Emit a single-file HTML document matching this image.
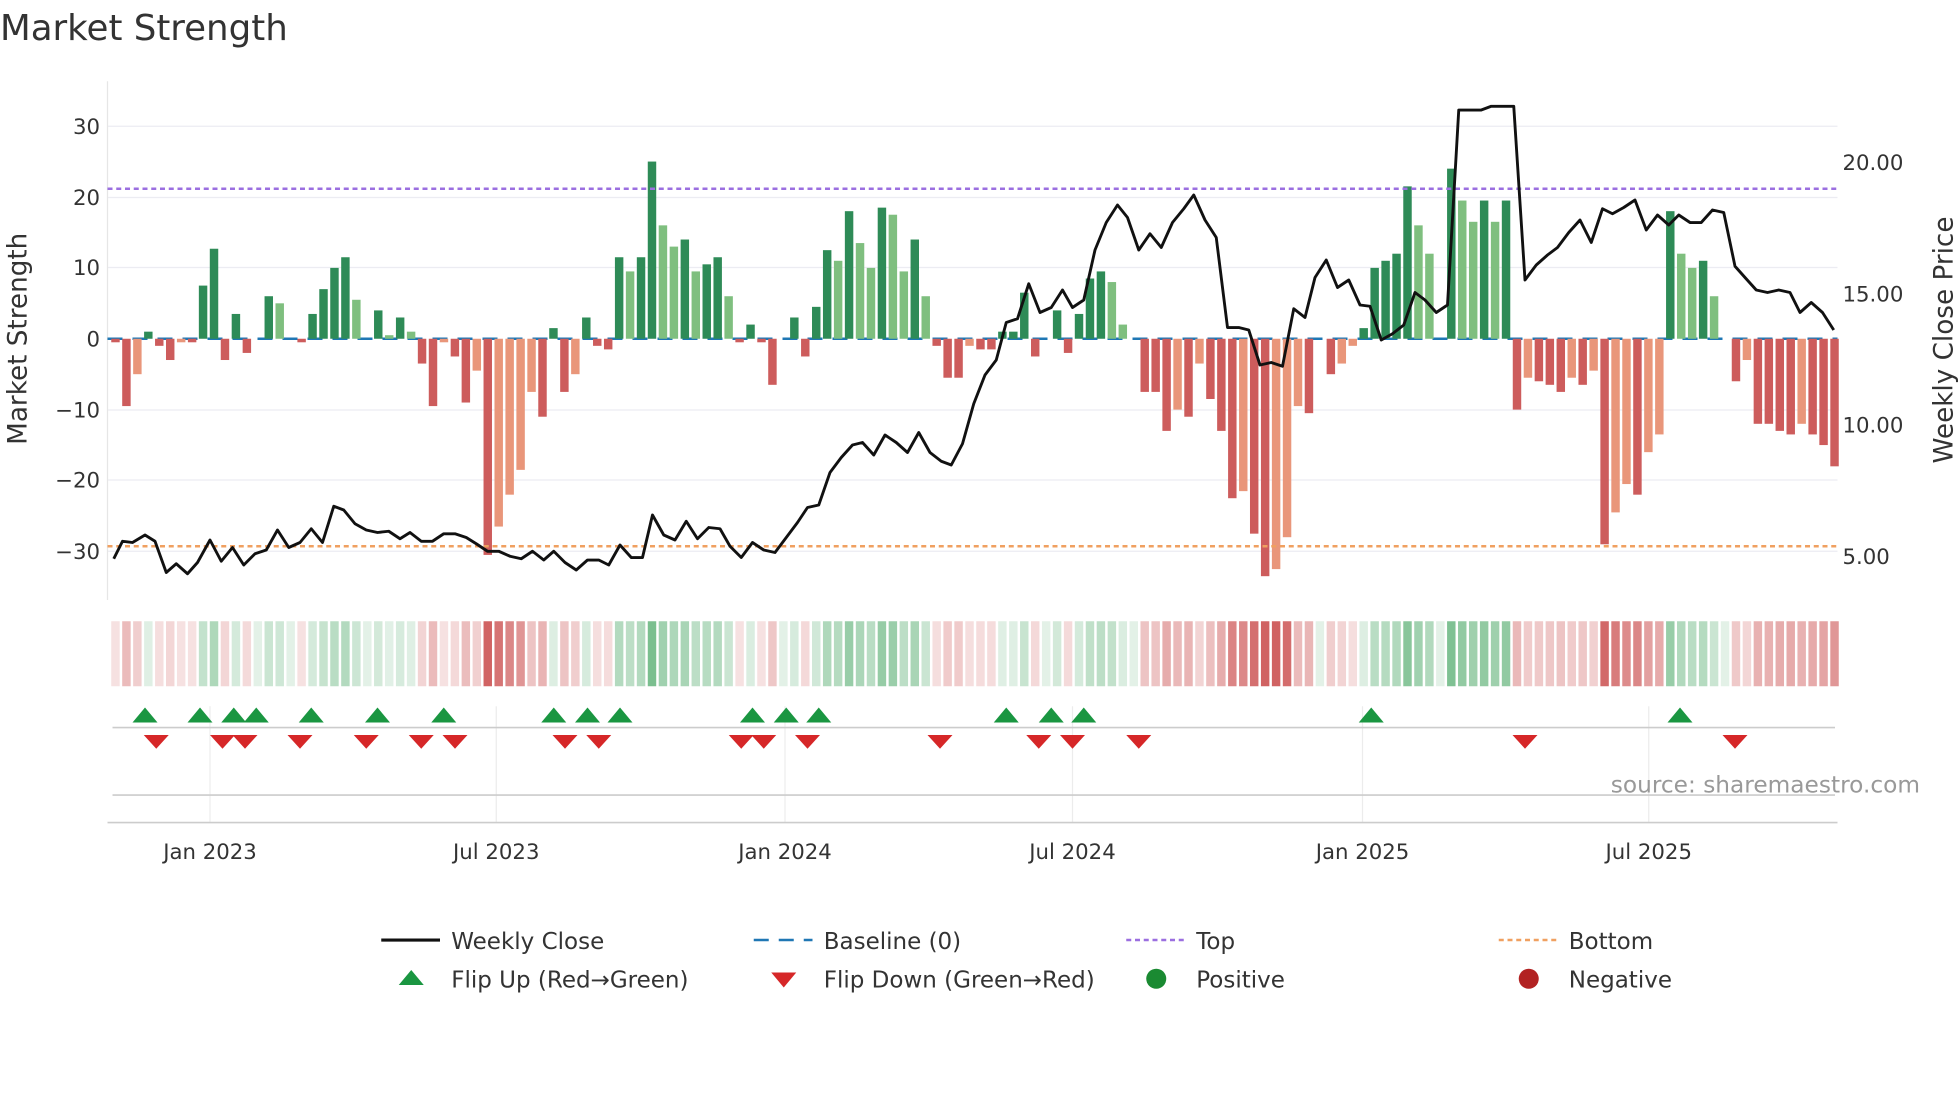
<!DOCTYPE html>
<html><head><meta charset="utf-8"><style>html,body{margin:0;padding:0;background:#fff;overflow:hidden}svg{display:block}text{font-family:"DejaVu Sans","Liberation Sans",sans-serif}</style></head>
<body>
<svg id="s" width="1960" height="1102" viewBox="0 0 1568 881.6" xmlns="http://www.w3.org/2000/svg">
<rect width="1568" height="882" fill="#fff"/>
<text x="0" y="32" font-size="28.5" fill="#333">Market Strength</text>
<g stroke="#ececf2" stroke-width="1">
<line x1="86" x2="1470" y1="101" y2="101"/><line x1="86" x2="1470" y1="158" y2="158"/><line x1="86" x2="1470" y1="214" y2="214"/><line x1="86" x2="1470" y1="328" y2="328"/><line x1="86" x2="1470" y1="384" y2="384"/><line x1="86" x2="1470" y1="441" y2="441"/>
</g>
<line x1="86" x2="86" y1="65" y2="480" stroke="#e6e6e6"/>
<g font-size="17" fill="#333" text-anchor="end">
<text x="80" y="107">30</text><text x="80" y="164">20</text><text x="80" y="220">10</text><text x="80" y="277">0</text><text x="80" y="334">−10</text><text x="80" y="390">−20</text><text x="80" y="447">−30</text>
</g>
<g font-size="17" fill="#333">
<text x="1474" y="136">20.00</text><text x="1474" y="241">15.00</text><text x="1474" y="346">10.00</text><text x="1474" y="451">5.00</text>
</g>
<text transform="translate(21,271) rotate(-90)" font-size="21" fill="#333" text-anchor="middle">Market Strength</text>
<text transform="translate(1562,272) rotate(-90)" font-size="21" fill="#333" text-anchor="middle">Weekly Close Price</text>
<line x1="86" x2="1470" y1="271" y2="271" stroke="#1f77b4" stroke-width="2" stroke-dasharray="12,8"/>
<g id="bars"></g>
<line x1="86" x2="1470" y1="151" y2="151" stroke="#9b6fe0" stroke-width="2" stroke-dasharray="4,3"/>
<line x1="86" x2="1470" y1="437" y2="437" stroke="#f0a060" stroke-width="2" stroke-dasharray="4,3"/>
<polyline id="price" fill="none" stroke="#111" stroke-width="2.3" stroke-linejoin="round"/>
<g id="heat"></g>
<g stroke="#ececec"><line x1="168" x2="168" y1="565" y2="658"/><line x1="397" x2="397" y1="565" y2="658"/><line x1="628" x2="628" y1="565" y2="658"/><line x1="858" x2="858" y1="565" y2="658"/><line x1="1090" x2="1090" y1="565" y2="658"/><line x1="1319" x2="1319" y1="565" y2="658"/></g>
<line x1="90" x2="1468" y1="582" y2="582" stroke="#ccc" stroke-width="1.3"/>
<line x1="90" x2="1468" y1="636" y2="636" stroke="#ccc" stroke-width="1.3"/>
<line x1="86" x2="1470" y1="658" y2="658" stroke="#ccc" stroke-width="1.3"/>
<g id="tri"></g>
<text x="1536" y="634" font-size="18.6" fill="#999" text-anchor="end">source: sharemaestro.com</text>
<g font-size="17" fill="#333" text-anchor="middle">
<text x="168" y="687">Jan 2023</text><text x="397" y="687">Jul 2023</text><text x="628" y="687">Jan 2024</text><text x="858" y="687">Jul 2024</text><text x="1090" y="687">Jan 2025</text><text x="1319" y="687">Jul 2025</text>
</g>
<g font-size="18.4" fill="#333">
<line x1="305" x2="352" y1="752" y2="752" stroke="#111" stroke-width="2.5"/><text x="361" y="759">Weekly Close</text>
<line x1="603" x2="650" y1="752" y2="752" stroke="#1f77b4" stroke-width="2" stroke-dasharray="12,8"/><text x="659" y="759">Baseline (0)</text>
<line x1="901" x2="948" y1="752" y2="752" stroke="#9b6fe0" stroke-width="2" stroke-dasharray="4,3"/><text x="957" y="759">Top</text>
<line x1="1199" x2="1246" y1="752" y2="752" stroke="#f0a060" stroke-width="2" stroke-dasharray="4,3"/><text x="1255" y="759">Bottom</text>
<polygon points="319,788 339,788 329,776" fill="#1a9641"/><text x="361" y="790">Flip Up (Red→Green)</text>
<polygon points="617,778 637,778 627,790" fill="#d62728"/><text x="659" y="790">Flip Down (Green→Red)</text>
<circle cx="925" cy="783" r="8" fill="#1a8a32"/><text x="957" y="790">Positive</text>
<circle cx="1223" cy="783" r="8" fill="#b22222"/><text x="1255" y="790">Negative</text>
</g>
</svg>
<script>
var v=[-0.5,-9.5,-5,1,-1,-3,-0.5,-0.5,7.5,12.7,-3,3.5,-2,0,6,5,0,-0.5,3.5,7,10,11.5,5.5,0,4,0.5,3,1,-3.5,-9.5,-0.5,-2.5,-9,-4.5,-30.5,-26.5,-22,-18.5,-7.5,-11,1.5,-7.5,-5,3,-1,-1.5,11.5,9.5,11.5,25,16,13,14,9.5,10.5,11.5,6,-0.5,2,-0.5,-6.5,0,3,-2.5,4.5,12.5,11,18,13.5,10,18.5,17.5,9.5,14,6,-1,-5.5,-5.5,-1,-1.5,-1.5,1,1,6.5,-2.5,0,4,-2,3.5,8.5,9.5,8,2,0,-7.5,-7.5,-13,-10,-11,-3.5,-8.5,-13,-22.5,-21.5,-27.5,-33.5,-32.5,-28,-9.5,-10.5,0,-5,-3.5,-1,1.5,10,11,12,21.5,16,12,0,24,19.5,16.5,19.5,16.5,19.5,-10,-5.5,-6,-6.5,-7.5,-5.5,-6.5,-4.5,-29,-24.5,-20.5,-22,-16,-13.5,18,12,10,11,6,0,-6,-3,-12,-12,-13,-13.5,-12,-13.5,-15,-18];
var n=v.length,x0=88,x1=1472,w=(x1-x0)/n,NS="http://www.w3.org/2000/svg";
function el(t,a,p){var e=document.createElementNS(NS,t);for(var k in a)e.setAttribute(k,a[k]);document.getElementById(p).appendChild(e);}
for(var i=0;i<n;i++){var val=v[i],x=x0+i*w,h=Math.abs(val)*5.67,prev=i?v[i-1]:0;var c;
if(val>=0)c=(val>=prev)?"#2e8b57":"#7fbf7f";else c=(val<=prev)?"#cd5c5c":"#e9967a";
if(h>0.3)el("rect",{x:x+1,y:val>=0?271-h:271,width:w-2,height:h,fill:c},"bars");
var a=Math.min(1,0.18+Math.abs(val)/30*0.8);var hc=val>=0?"rgba(60,160,90,"+a*0.8+")":"rgba(200,70,70,"+a*0.85+")";
el("rect",{x:x+1,y:497,width:w-2,height:52,fill:hc},"heat");}
var p=[91,447,98,433,106,434,116,428,124,433,133,458,141,451,150,459,158,450,168,432,177,449,186,438,195,452,204,443,213,440,222,424,231,438,240,434,249,423,258,434,267,405,275,408,284,419,293,424,302,426,311,425,320,431,328,426,337,433,346,433,355,427,364,427,373,430,381,435,390,441,399,441,408,445,417,447,426,441,435,448,443,441,452,450,461,456,470,448,479,448,487,452,496,436,505,446,514,446,522,412,531,428,540,432,549,417,558,431,567,422,576,423,584,437,593,446,602,434,611,440,620,442,629,430,638,418,646,406,655,404,664,378,673,366,682,356,690,354,699,364,708,348,717,354,726,362,735,346,744,362,753,369,761,372,770,355,779,323,788,300,797,288,805,258,814,255,823,227,832,250,841,246,850,232,858,246,867,240,876,200,885,178,894,164,902,174,911,200,920,187,929,198,938,178,947,167,955,156,964,176,973,190,982,262,991,262,999,264,1008,292,1017,290,1026,293,1035,247,1044,254,1052,222,1061,208,1070,230,1079,224,1088,244,1096,245,1105,272,1114,267,1123,260,1132,234,1140,240,1149,250,1158,244,1167,88,1176,88,1185,88,1193,85,1202,85,1211,85,1220,224,1229,212,1238,204,1246,198,1255,186,1264,176,1273,194,1282,167,1290,171,1299,166,1308,160,1317,184,1326,172,1335,180,1343,172,1352,178,1361,178,1370,168,1379,170,1388,213,1396,222,1405,232,1414,234,1423,232,1432,234,1440,250,1449,242,1458,250,1467,264];
var s="";for(var j=0;j<p.length;j+=2)s+=p[j]+","+p[j+1]+" ";document.getElementById("price").setAttribute("points",s);
[116,160,187,205,249,302,355,443,470,496,602,629,655,805,841,867,1097,1344].forEach(function(x){el("polygon",{points:(x-10)+",578 "+(x+10)+",578 "+x+",566",fill:"#1a9641"},"tri");});
[125,178,196,240,293,337,364,452,479,593,611,646,752,831,858,911,1220,1388].forEach(function(x){el("polygon",{points:(x-10)+",588 "+(x+10)+",588 "+x+",599",fill:"#d62728"},"tri");});
</script>
</body></html>
